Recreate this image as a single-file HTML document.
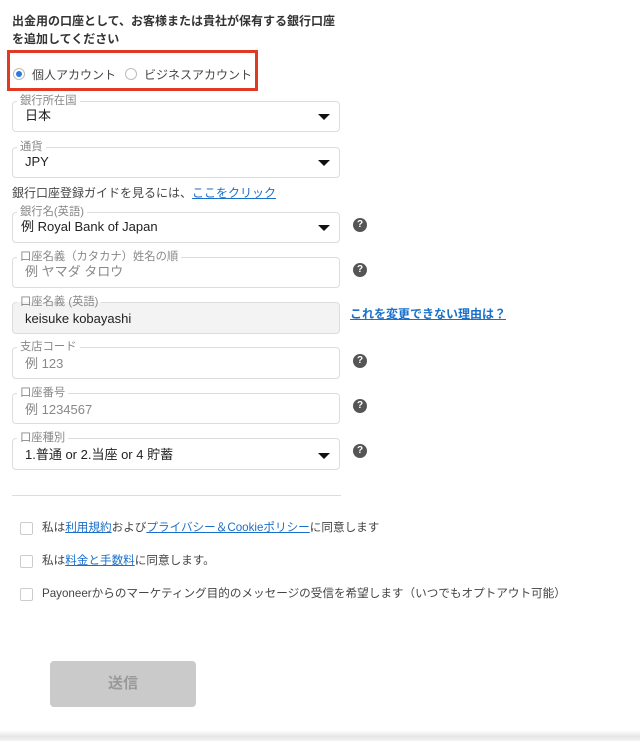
<!DOCTYPE html>
<html><head><meta charset="utf-8"><style>
body{margin:0;width:640px;height:741px;background:#fff;position:relative;overflow:hidden;font-family:"Liberation Sans","Noto Sans CJK JP",sans-serif;color:#222}
.a{position:absolute}
.h{left:12px;font-size:12px;font-weight:bold;color:#333}
.f{position:absolute;left:12px;width:328px;height:31px;border:1px solid #ddd;border-radius:4px;box-sizing:border-box;background:#fff}
.f .l{position:absolute;left:4px;top:-8px;background:#fff;padding:0 3px;font-size:11.3px;color:#888;line-height:14px}
.f .v{position:absolute;left:12px;top:6px;font-size:13px;color:#222;line-height:15px}
.f .p{color:#888}
.f .ar{position:absolute;right:9px;top:12px;width:0;height:0;border-left:6px solid transparent;border-right:6px solid transparent;border-top:6px solid #111}
.q{position:absolute;left:353px;width:14px;height:14px;border-radius:50%;background:#555;color:#fff;font-size:10px;font-weight:bold;text-align:center;line-height:14px}
.cb{position:absolute;left:20px;width:11px;height:11px;border:1px solid #ccc;border-radius:2px}
.ct{position:absolute;left:42px;font-size:11.6px;color:#444;line-height:14px}
a{color:#1a6fc9;text-decoration:underline}
</style></head><body>
<div class="a h" style="top:12px">出金用の口座として、お客様または貴社が保有する銀行口座</div>
<div class="a h" style="top:30px">を追加してください</div>
<div class="a" style="left:7px;top:50px;width:245px;height:35px;border:3px solid #e03a22"></div>
<div class="a" style="left:13px;top:68px;width:10px;height:10px;border:1px solid #bbb;border-radius:50%"><div style="margin:2px;width:6px;height:6px;border-radius:50%;background:#2a78e0"></div></div>
<div class="a" style="left:32px;top:66px;font-size:12px;color:#444">個人アカウント</div>
<div class="a" style="left:125px;top:68px;width:10px;height:10px;border:1px solid #bbb;border-radius:50%"></div>
<div class="a" style="left:144px;top:66px;font-size:12px;color:#444">ビジネスアカウント</div>

<div class="f" style="top:101px"><span class="l">銀行所在国</span><span class="v">日本</span><span class="ar"></span></div>
<div class="f" style="top:147px"><span class="l">通貨</span><span class="v">JPY</span><span class="ar"></span></div>
<div class="a" style="left:12px;top:184px;font-size:12px;color:#444">銀行口座登録ガイドを見るには、<a>ここをクリック</a></div>
<div class="f" style="top:212px"><span class="l">銀行名(英語)</span><span class="v" style="left:8px">例 Royal Bank of Japan</span><span class="ar"></span></div>
<div class="q" style="top:218px">?</div>
<div class="f" style="top:257px"><span class="l">口座名義（カタカナ）姓名の順</span><span class="v p">例 ヤマダ タロウ</span></div>
<div class="q" style="top:263px">?</div>
<div class="f" style="top:302px;height:32px;background:#f3f3f3"><span class="l" style="background:linear-gradient(#fff 50%,#f3f3f3 50%)">口座名義 (英語)</span><span class="v" style="top:8px">keisuke kobayashi</span></div>
<div class="a" style="left:350px;top:305px;font-size:12px;font-weight:bold"><a>これを変更できない理由は？</a></div>
<div class="f" style="top:347px;height:32px"><span class="l">支店コード</span><span class="v p" style="top:8px">例 123</span></div>
<div class="q" style="top:354px">?</div>
<div class="f" style="top:393px"><span class="l">口座番号</span><span class="v p" style="top:8px">例 1234567</span></div>
<div class="q" style="top:399px">?</div>
<div class="f" style="top:438px;height:32px"><span class="l">口座種別</span><span class="v" style="top:8px">1.普通 or 2.当座 or 4 貯蓄</span><span class="ar" style="top:14px"></span></div>
<div class="q" style="top:444px">?</div>
<div class="a" style="left:12px;top:495px;width:329px;height:1px;background:#ddd"></div>
<div class="cb" style="top:522px"></div><div class="ct" style="top:521px">私は<a>利用規約</a>および<a>プライバシー＆Cookieポリシー</a>に同意します</div>
<div class="cb" style="top:555px"></div><div class="ct" style="top:554px">私は<a>料金と手数料</a>に同意します。</div>
<div class="cb" style="top:588px"></div><div class="ct" style="top:587px">Payoneerからのマーケティング目的のメッセージの受信を希望します（いつでもオプトアウト可能）</div>
<div class="a" style="left:50px;top:661px;width:146px;height:46px;background:#cacaca;border-radius:4px;color:#999;font-size:15px;font-weight:bold;text-align:center;line-height:46px">送信</div>
<div class="a" style="left:0;top:730px;width:640px;height:11px;background:linear-gradient(#fff,#e6e6e6 60%,#f4f4f4)"></div>
</body></html>
